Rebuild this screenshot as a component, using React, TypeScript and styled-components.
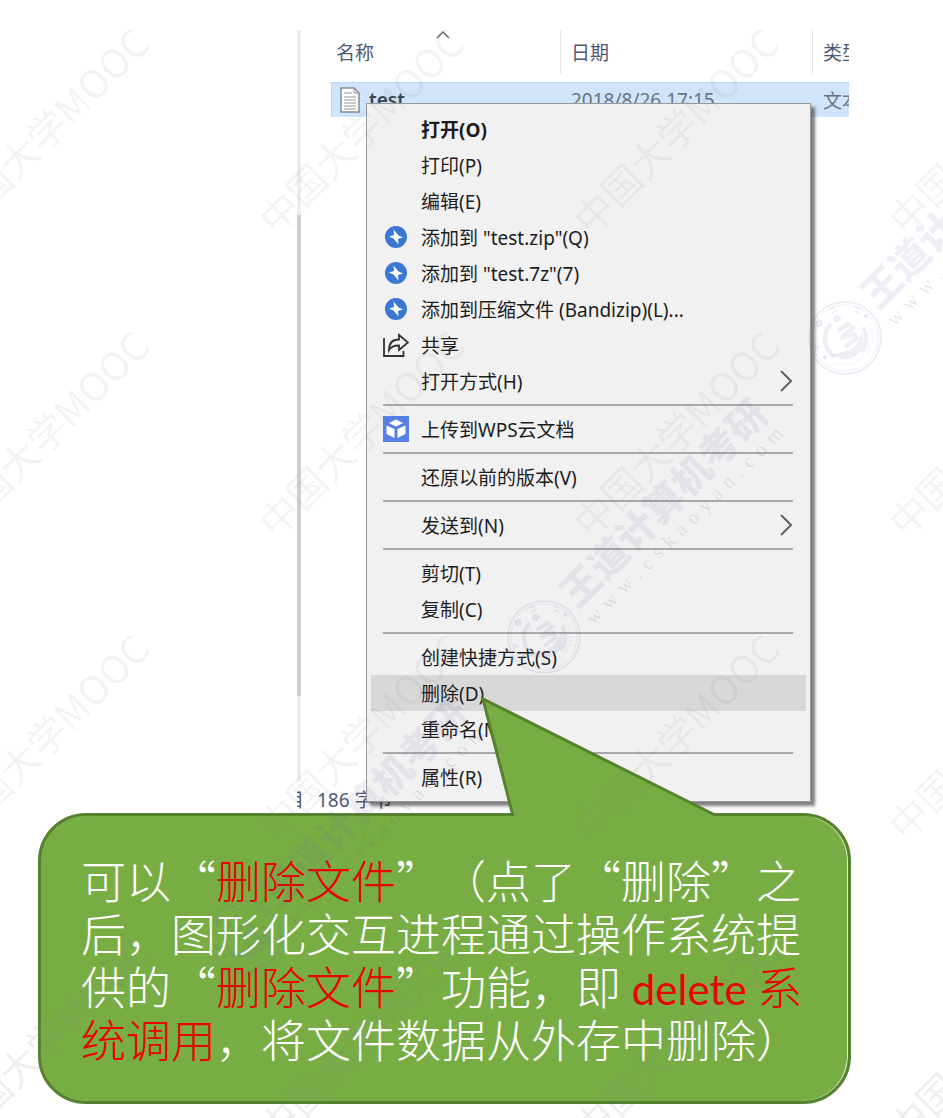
import React from "react";
import styled, { createGlobalStyle } from "styled-components";

const Global = createGlobalStyle`
  * { box-sizing: border-box; }
  body {
    margin: 0;
    background: #ffffff;
    color: #1c1c1c;
    font-family: "Noto Sans", "Noto Sans CJK SC", sans-serif;
    font-size: 19px;
  }
`;

const Page = styled.main`
  position: relative;
  overflow: hidden;
  min-height: 100vh;
  padding: 30px 92px 15px 38px;
`;

const Explorer = styled.section`
  display: grid;
  grid-template-columns: 4px minmax(0, 1fr);
  column-gap: 30px;
  margin: 0 2px 0 259px;
`;

const ScrollTrack = styled.div`
  display: flex;
  flex-direction: column;
  margin-bottom: 21px;
  background: #ededed;
`;

const ScrollSpace = styled.div<{ $share: number }>`
  flex: ${(p) => p.$share};
`;

const ScrollThumb = styled(ScrollSpace)`
  background: #cecece;
`;

const FileTable = styled.table`
  width: 100%;
  table-layout: fixed;
  border-collapse: separate;
  border-spacing: 0;
`;

const HeadCell = styled.th<{ $width?: number }>`
  position: relative;
  width: ${(p) => (p.$width ? `${p.$width}px` : "auto")};
  height: 44px;
  padding: 0 0 0 10px;
  overflow: hidden;
  white-space: nowrap;
  text-align: left;
  font-weight: 400;
  color: #4d5a74;
  border-left: 1px solid #e4e4e4;
  &:first-child {
    padding-left: 4px;
    border-left-color: transparent;
  }
`;

const SortMark = styled.svg`
  position: absolute;
  top: 0;
  left: 104px;
`;

const Spacer = styled.tr`
  height: 8px;
`;

const FileCell = styled.td`
  height: 35px;
  padding: 0 0 0 11px;
  overflow: hidden;
  white-space: nowrap;
  background: #cfe5fc;
  border-top: 1px solid #b5d6f5;
  color: #6b7480;
  &:first-child {
    padding-left: 8px;
    border-left: 1px solid #b5d6f5;
  }
`;

const FileName = styled.span`
  display: flex;
  align-items: center;
  gap: 9px;
  font-weight: 600;
  color: #3a434e;
`;

const Menu = styled.div`
  position: relative;
  z-index: 1;
  margin: -14px 38px 0 35px;
  padding: 7px 4px 6px;
  background: #f1f1f1;
  border: 1px solid #9a9a9a;
  box-shadow: 4px 4px 3px rgba(0, 0, 0, 0.5);
`;

const Item = styled.button<{ $strong?: boolean; $active?: boolean }>`
  display: grid;
  grid-template-columns: 50px minmax(0, 1fr) 27px;
  align-items: center;
  width: 100%;
  height: 36px;
  padding: 0;
  border: 0;
  text-align: left;
  white-space: nowrap;
  font: inherit;
  color: inherit;
  font-weight: ${(p) => (p.$strong ? 700 : 400)};
  background: ${(p) => (p.$active ? "#d8d8d8" : "transparent")};
`;

const IconSlot = styled.span`
  display: flex;
  justify-content: center;
`;

const Rule = styled.hr`
  height: 2px;
  margin: 5px 13px 5px 12px;
  border: 0;
  background: #a8a8a8;
`;

const Status = styled.footer`
  grid-column: 1 / -1;
  display: flex;
  gap: 13px;
  height: 25px;
  margin-top: -14px;
  line-height: 24px;
  color: #4d5a74;
`;

const StatusEdge = styled.span`
  display: flex;
  justify-content: flex-end;
  width: 7px;
  overflow: hidden;
`;

const Callout = styled.section`
  position: relative;
  z-index: 2;
  padding: 37px 40px 36px 40px;
  border: 3px solid #56822f;
  border-radius: 48px;
  background: #78ad44;
  box-shadow: inset -1px 0 0 #e6f0dc;
`;

const Pointer = styled.svg`
  position: absolute;
  left: 439px;
  top: -121px;
`;

const CalloutText = styled.p`
  margin: 0;
  font-family: "Noto Sans CJK SC", sans-serif;
  font-size: 45px;
  font-weight: 300;
  line-height: 53px;
  color: #ffffff;
  text-spacing-trim: space-all;
`;

const Line = styled.span`
  display: block;
  white-space: nowrap;
`;

const Red = styled.em`
  font-style: normal;
  color: #ec0000;
`;

const Latin = styled.span`
  font-family: Lato, sans-serif;
  font-size: 42px;
  font-weight: 400;
  line-height: 1;
`;

const Marks = styled.div`
  position: absolute;
  inset: 0;
  z-index: 3;
  overflow: hidden;
  pointer-events: none;
`;

const Mark = styled.div<{ $x: number; $y: number; $alpha: number }>`
  position: absolute;
  left: ${(p) => p.$x}px;
  top: ${(p) => p.$y}px;
  width: 290px;
  line-height: 40px;
  font-family: "Noto Sans CJK SC", sans-serif;
  font-size: 39px;
  font-weight: 400;
  white-space: nowrap;
  color: rgba(128, 128, 128, ${(p) => p.$alpha});
  transform-origin: 0 50%;
  transform: rotate(-45deg);
`;

const Brand = styled.div<{ $x: number; $y: number }>`
  position: absolute;
  left: ${(p) => p.$x}px;
  top: ${(p) => p.$y}px;
  display: flex;
  align-items: center;
  gap: 5px;
  height: 76px;
  color: rgba(92, 84, 170, 0.1);
  transform-origin: 38px 38px;
  transform: rotate(-45deg);
`;

const Seal = styled.svg`
  transform: rotate(45deg);
`;

const BrandText = styled.div`
  display: flex;
  flex-direction: column;
  padding-bottom: 2px;
`;

const BrandName = styled.span`
  line-height: 42px;
  font-family: "Noto Sans CJK SC", sans-serif;
  font-size: 39px;
  font-weight: 900;
  white-space: nowrap;
`;

const BrandSite = styled.span`
  display: flex;
  justify-content: space-between;
  width: 270px;
  line-height: 24px;
  font-family: "Liberation Serif", serif;
  font-size: 20px;
  color: rgba(100, 96, 130, 0.16);
`;

const Bolt = () => (
  <svg width="22" height="22" viewBox="0 0 22 22" aria-hidden="true">
    <circle cx="11" cy="11" r="11" fill="#3a78d4" />
    <path d="M8.500 3.500 13.500 9.500 18 11.500 13 13 13.500 18.500 8.500 12.500 4 10.500 9 9z" fill="#fff" />
  </svg>
);

const Share = () => (
  <svg width="26" height="24" viewBox="0 0 26 24" fill="none" stroke="#333" strokeWidth="1.800" aria-hidden="true">
    <path d="M1 5v18h19.500v-5" />
    <path d="M6 17c0-7 4-10.500 10-10.500V2l9 7.500-9 7.500v-4.500c-5 0-8 1-10 4.500z" />
  </svg>
);

const Cube = () => (
  <svg width="26" height="26" viewBox="0 0 26 26" aria-hidden="true">
    <rect width="26" height="26" fill="#5680e4" />
    <path d="M13 3.500 20 7l-7 3.500L6 7zM3.500 9.500l8 3.500v9l-8-4zM22.500 9.500l-8 3.500v9l8-4z" fill="#fff" />
  </svg>
);

const More = () => (
  <svg width="14" height="22" viewBox="0 0 14 22" fill="none" stroke="#5f6068" strokeWidth="2" aria-hidden="true">
    <path d="M2 1l10 10L2 21" />
  </svg>
);

const Paper = () => (
  <svg width="20" height="26" viewBox="0 0 20 26" aria-hidden="true">
    <path d="M1 1h13l5 5v19H1z" fill="#fbfbfb" stroke="#8b8b8b" strokeWidth="1.500" />
    <path d="M14 1v5h5M4 6h8M4 10h12M4 13h12M4 16h12M4 19h12M4 22h12" fill="none" stroke="#9a9a9a" />
  </svg>
);

const SealArt = () => (
  <Seal width="76" height="76" viewBox="0 0 76 76" fill="none" stroke="currentColor" aria-hidden="true">
    <circle cx="38" cy="38" r="36" strokeWidth="2" />
    <circle cx="38" cy="38" r="33" strokeWidth="1" />
    <path d="M62 25a28 28 0 0 1-35 38" strokeWidth="4" strokeDasharray="2 2" opacity="0.500" />
    <path d="M24 24a21 21 0 0 0 3 32M56 27a21 21 0 0 1-2 25" strokeWidth="4" />
    <path d="M31 31l10-7 5 4-12 10 13-4 3 4-12 9" strokeWidth="4" />
    <path d="M22 58c8-9 20-3 27-13l7-13c2 12-2 24-14 27-7 1-13-3-20-1z" fill="currentColor" stroke="none" />
    <path d="M29 15l5 3-4 4-4-3zM9 22l5-2 1 5-5 2z" fill="currentColor" />
    <path d="M23 9l5-2M25 13l5-3M48 7l5 2M48 11l5 2M6 45l6 2M7 50l5-3" strokeWidth="1.500" />
    <circle cx="59" cy="16" r="1.500" fill="currentColor" />
    <circle cx="18" cy="57" r="1.500" fill="currentColor" />
  </Seal>
);

type Entry = { label: string; icon?: React.ReactNode; strong?: boolean; active?: boolean; more?: boolean };

const groups: Entry[][] = [
  [
    { label: "打开(O)", strong: true },
    { label: "打印(P)" },
    { label: "编辑(E)" },
    { label: '添加到 "test.zip"(Q)', icon: <Bolt /> },
    { label: '添加到 "test.7z"(7)', icon: <Bolt /> },
    { label: "添加到压缩文件 (Bandizip)(L)...", icon: <Bolt /> },
    { label: "共享", icon: <Share /> },
    { label: "打开方式(H)", more: true },
  ],
  [{ label: "上传到WPS云文档", icon: <Cube /> }],
  [{ label: "还原以前的版本(V)" }],
  [{ label: "发送到(N)", more: true }],
  [{ label: "剪切(T)" }, { label: "复制(C)" }],
  [{ label: "创建快捷方式(S)" }, { label: "删除(D)", active: true }, { label: "重命名(M)" }],
  [{ label: "属性(R)" }],
];

const markColumns = [-51, 264, 579, 894];
const markRows = [
  { y: 205, alpha: 0.09 },
  { y: 508, alpha: 0.09 },
  { y: 811, alpha: 0.09 },
  { y: 1114, alpha: 0.15 },
];
const brands = [
  { x: 807, y: 300 },
  { x: 506, y: 599 },
  { x: 207, y: 899 },
];

export default function App() {
  return (
    <Page lang="zh-CN">
      <Global />
      <Explorer>
        <ScrollTrack>
          <ScrollSpace $share={185} />
          <ScrollThumb $share={480} />
          <ScrollSpace $share={85} />
        </ScrollTrack>
        <div>
          <FileTable>
            <thead>
              <tr>
                <HeadCell $width={229}>
                  名称
                  <SortMark width="14" height="9" viewBox="0 0 14 9" fill="none" stroke="#6b6b6b" strokeWidth="1.500" aria-hidden="true">
                    <path d="M1 8l6-6 6 6" />
                  </SortMark>
                </HeadCell>
                <HeadCell $width={252}>日期</HeadCell>
                <HeadCell>类型</HeadCell>
              </tr>
            </thead>
            <tbody>
              <Spacer />
              <tr>
                <FileCell>
                  <FileName>
                    <Paper />
                    test
                  </FileName>
                </FileCell>
                <FileCell>2018/8/26 17:15</FileCell>
                <FileCell>文本文档</FileCell>
              </tr>
            </tbody>
          </FileTable>
          <Menu role="menu">
            {groups.map((group, index) => (
              <React.Fragment key={index}>
                {index > 0 && <Rule />}
                {group.map((entry) => (
                  <Item key={entry.label} type="button" role="menuitem" $strong={entry.strong} $active={entry.active}>
                    <IconSlot>{entry.icon}</IconSlot>
                    {entry.label}
                    {entry.more && <More />}
                  </Item>
                ))}
              </React.Fragment>
            ))}
          </Menu>
        </div>
        <Status>
          <StatusEdge>目</StatusEdge>
          <span>186 字节</span>
        </Status>
      </Explorer>
      <Callout>
        <Pointer width="240" height="123" viewBox="0 0 240 123" aria-hidden="true">
          <path d="M33 122V119L3 4l232 115v3z" fill="#78ad44" />
          <path d="M33 121 3 4l232 116" fill="none" stroke="#56822f" strokeWidth="3" />
        </Pointer>
        <CalloutText>
          <Line>
            可以“<Red>删除文件</Red>”（点了“删除”之
          </Line>
          <Line>后，图形化交互进程通过操作系统提</Line>
          <Line>
            供的“<Red>删除文件</Red>”功能，即<Red><Latin> delete </Latin>系</Red>
          </Line>
          <Line>
            <Red>统调用</Red>，将文件数据从外存中删除）
          </Line>
        </CalloutText>
      </Callout>
      <Marks aria-hidden="true">
        {markRows.map((row) =>
          markColumns.map((x) => (
            <Mark key={`${x}-${row.y}`} $x={x} $y={row.y} $alpha={row.alpha}>
              中国大学MOOC
            </Mark>
          )),
        )}
        {brands.map((brand) => (
          <Brand key={brand.x} $x={brand.x} $y={brand.y}>
            <SealArt />
            <BrandText>
              <BrandName>王道计算机考研</BrandName>
              <BrandSite>
                {"www.cskaoyan.com".split("").map((letter, index) => (
                  <span key={index}>{letter}</span>
                ))}
              </BrandSite>
            </BrandText>
          </Brand>
        ))}
      </Marks>
    </Page>
  );
}
